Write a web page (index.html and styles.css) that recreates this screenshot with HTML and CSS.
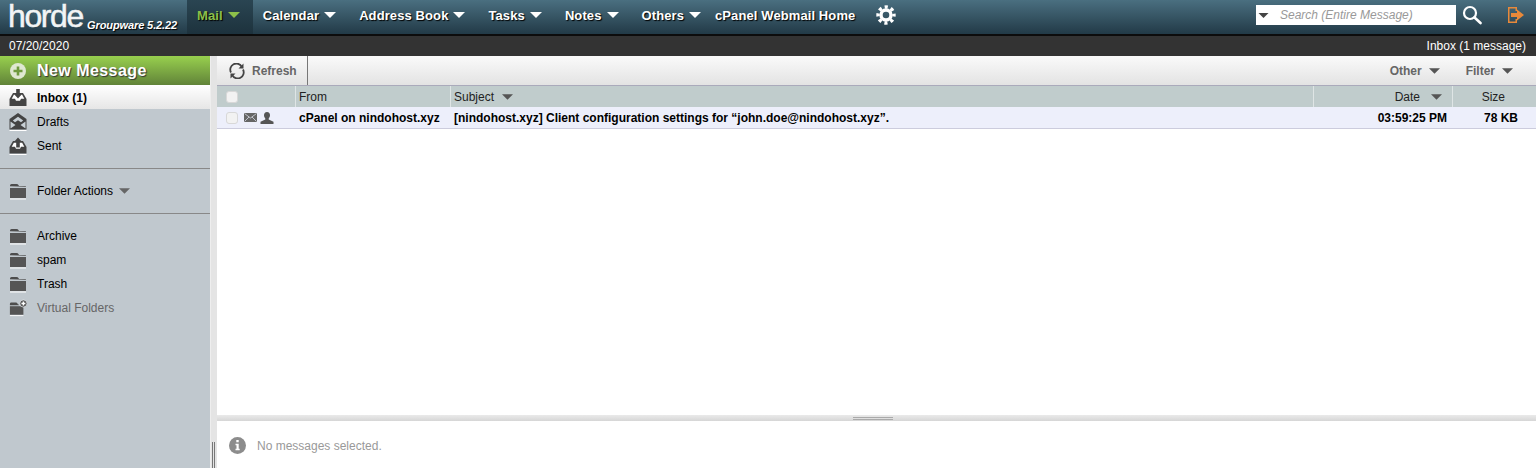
FILE: index.html
```html
<!DOCTYPE html>
<html lang="en">
<head>
<meta charset="utf-8">
<title>Horde Mail</title>
<link rel="stylesheet" href="styles.css">
</head>
<body>
<svg class="defs" width="0" height="0" aria-hidden="true">
  <defs>
    <symbol id="caret" viewBox="0 0 12 6"><path d="M0 0h12L6 6z"/></symbol>
    <symbol id="folder" viewBox="0 0 18 18"><path d="M1 4.200V3.500Q1 2 2.500 2h5Q9 2 9.600 3.200L10 4h6.500Q17 4 17 4.800z" fill="#4d4d4d"/><path d="M1 6h16v10H1z" fill="#555"/><path d="M1 16.500h16v1H1z" fill="#fff"/></symbol>
  </defs>
</svg>
<header class="topbar">
  <div class="logo"><span class="logo-word">horde</span><span class="logo-sub">Groupware 5.2.22</span></div>
  <nav class="nav">
    <a class="nav-item active">Mail<svg class="nav-caret"><use href="#caret"/></svg></a>
    <a class="nav-item">Calendar<svg class="nav-caret"><use href="#caret"/></svg></a>
    <a class="nav-item">Address Book<svg class="nav-caret"><use href="#caret"/></svg></a>
    <a class="nav-item">Tasks<svg class="nav-caret"><use href="#caret"/></svg></a>
    <a class="nav-item">Notes<svg class="nav-caret"><use href="#caret"/></svg></a>
    <a class="nav-item tight">Others<svg class="nav-caret"><use href="#caret"/></svg></a>
    <a class="nav-item plain">cPanel Webmail Home</a>
    <a class="nav-gear">
      <svg width="20" height="20" viewBox="0 0 20 20" fill="none" stroke="#fff"><circle cx="10" cy="10" r="5" stroke-width="3.400"/><circle cx="10" cy="10" r="8" stroke-width="3.400" stroke-dasharray="3.140 3.140" stroke-dashoffset="1.570"/></svg>
    </a>
  </nav>
  <div class="top-right">
    <div class="search">
      <svg class="search-caret"><use href="#caret"/></svg>
      <span class="search-text">Search (Entire Message)</span>
    </div>
    <svg class="search-icon" width="20" height="20" viewBox="0 0 20 20"><circle cx="8" cy="8" r="6" fill="none" stroke="#fff" stroke-width="2.200"/><path d="M12.500 12.500l6 5.500" stroke="#fff" stroke-width="2.600" stroke-linecap="round"/></svg>
    <svg class="logout-icon" width="18" height="18" viewBox="0 0 18 18"><path d="M1 1h9v4H8.500V2.500h-6v13h6V13H10v4H1z" fill="#e8893a"/><path d="M4 7h6V3.500L17 9l-7 5.500V11H4z" fill="#e8893a"/></svg>
  </div>
</header>
<div class="statusbar"><span>07/20/2020</span><span>Inbox (1 message)</span></div>
<main class="main">
  <aside class="sidebar">
    <a class="new-message">
      <svg width="16" height="16" viewBox="0 0 16 16"><circle cx="8" cy="8" r="8" fill="#dfe8d2"/><path d="M6.700 3.500h2.600v3.200h3.200v2.600H9.300v3.200H6.700V9.300H3.500V6.700h3.200z" fill="#6f9a3e"/></svg>
      <span>New Message</span>
    </a>
    <div class="side-row current">
      <svg class="mbox" viewBox="0 0 18 18"><path d="M4 4h10l3.500 6v7H.5v-7z" fill="#444"/><path d="M5 5.500L2.700 9.800H6l1 2h4l1-2h3.300L13 5.500z" fill="#fff"/><path d="M7.200 0h3.600v4.500h2.700L9 9.500l-4.500-5h2.700z" fill="#444"/></svg>
      <span>Inbox (1)</span>
    </div>
    <div class="side-row">
      <svg class="mbox" viewBox="0 0 18 18"><path d="M9 0l8.500 6v10.500H.5V6z" fill="#444"/><path d="M9 3.800L3.800 7.500 6 9.200 9 7.200l3 2 2.200-1.700z" fill="#c8d0d6"/><path d="M1.500 8.500L6.500 12 1.500 15.500zM16.500 8.500L11.500 12l5 3.500z" fill="#c8d0d6"/><path d="M.5 17h17v1H.5z" fill="#fff"/></svg>
      <span>Drafts</span>
    </div>
    <div class="side-row">
      <svg class="mbox" viewBox="0 0 18 18"><path d="M4 4h10l3.500 6v6.500H.5V10z" fill="#444"/><path d="M5 5.500L2.700 9.800H6l1 2h4l1-2h3.300L13 5.500z" fill="#fff"/><path d="M9 .5l4.500 5h-2.700v5H7.200v-5H4.500z" fill="#444"/><path d="M.5 17h17v1H.5z" fill="#fff"/></svg>
      <span>Sent</span>
    </div>
    <div class="side-group actions">
      <div class="side-row">
        <svg class="mbox"><use href="#folder"/></svg>
        <span>Folder Actions</span>
        <svg class="side-caret"><use href="#caret"/></svg>
      </div>
    </div>
    <div class="side-group folders">
      <div class="side-row"><svg class="mbox"><use href="#folder"/></svg><span>Archive</span></div>
      <div class="side-row"><svg class="mbox"><use href="#folder"/></svg><span>spam</span></div>
      <div class="side-row"><svg class="mbox"><use href="#folder"/></svg><span>Trash</span></div>
      <div class="side-row muted">
        <svg class="mbox" viewBox="0 0 20 20"><path d="M1 7V5.500Q1 4 2.500 4h5Q9 4 9.600 5.200L10 6h1v1z" fill="#4d4d4d"/><path d="M1 8h15v9.500H1z" fill="#555"/><path d="M1 18h15v1H1z" fill="#fff"/><circle cx="16" cy="5" r="4" fill="#555" stroke="#e4e8ea" stroke-width=".8"/><path d="M15.200 2.800h1.600v1.400h1.400v1.600h-1.400v1.400h-1.600V5.800h-1.400V4.200h1.400z" fill="#fff"/></svg>
        <span>Virtual Folders</span>
      </div>
    </div>
  </aside>
  <div class="splitter"><i class="grip"></i></div>
  <section class="content">
    <div class="toolbar">
      <a class="refresh">
        <svg width="16" height="16" viewBox="0 0 16 16" fill="none" stroke="#444" stroke-width="1.800"><path d="M2 9.500A6 6 0 0 1 12.800 3.800"/><path d="M14 6.500A6 6 0 0 1 3.200 12.200"/><path d="M14.500 .5v5h-5z" fill="#444" stroke="none"/><path d="M1.500 15.500v-5h5z" fill="#444" stroke="none"/></svg>
        <span>Refresh</span>
      </a>
      <div class="tool-right">
        <a class="tool-link">Other<svg class="tool-caret"><use href="#caret"/></svg></a>
        <a class="tool-link">Filter<svg class="tool-caret"><use href="#caret"/></svg></a>
      </div>
    </div>
    <div class="list-head">
      <div class="col-icons"><i class="check"></i></div>
      <div class="col-from sep">From</div>
      <div class="col-subject sep">Subject<svg class="head-caret"><use href="#caret"/></svg></div>
      <div class="col-date sep">Date<svg class="head-caret"><use href="#caret"/></svg></div>
      <div class="col-size sep">Size</div>
    </div>
    <div class="list-row">
      <div class="col-icons">
        <i class="check"></i>
        <svg class="env" width="13" height="9" viewBox="0 0 13 9"><path d="M0 0h13v9H0z" fill="#666"/><path d="M.5.500L6.500 5l6-4.500M.5 8.500L5 4M12.500 8.500L8 4" fill="none" stroke="#d8dbe6" stroke-width=".8"/></svg>
        <svg class="person" width="14" height="12" viewBox="0 0 14 12"><path d="M7 0c2 0 3 1.500 3 3.300 0 1.400-.6 2.400-1.300 3.200v1l4.800 2.300V12H.5V9.800L5.300 7.500v-1C4.600 5.700 4 4.700 4 3.300 4 1.500 5 0 7 0z" fill="#555"/></svg>
      </div>
      <div class="col-from">cPanel on nindohost.xyz</div>
      <div class="col-subject">[nindohost.xyz] Client configuration settings for “john.doe@nindohost.xyz”.</div>
      <div class="col-date">03:59:25 PM</div>
      <div class="col-size">78 KB</div>
    </div>
    <div class="list-empty"></div>
    <div class="preview-split"><i class="preview-grip"></i></div>
    <div class="preview">
      <svg width="17" height="17" viewBox="0 0 17 17"><circle cx="8.500" cy="8.500" r="8.500" fill="#8c8c8c"/><path d="M7.300 3h2.400v2.200H7.300zM6.500 6.800h3.200v5h1v1.500H6.500v-1.500h1v-3.500h-1z" fill="#fff"/></svg>
      <span>No messages selected.</span>
    </div>
  </section>
</main>
</body>
</html>
```
FILE: styles.css
```css
* { box-sizing: border-box; }
html, body { margin: 0; height: 468px; overflow: hidden; }
body {
  display: flex;
  flex-direction: column;
  font-family: "Liberation Sans", Arial, sans-serif;
  font-size: 12px;
  color: #000;
  background: #fff;
}
.defs { position: absolute; }
svg { display: block; flex: none; }

.topbar {
  height: 36px;
  display: flex;
  background: linear-gradient(#4a6f80, #223a47);
  border-bottom: 2px solid #0c0c0c;
  flex: none;
}
.logo { width: 187px; padding-left: 8px; display: flex; align-items: flex-start; color: #fff; }
.logo-word {
  font-size: 32px;
  line-height: 32px;
  letter-spacing: -1.400px;
  font-weight: 400;
  width: 79px;
  color: #f2f4f5;
  -webkit-text-stroke: .5px #f2f4f5;
}
.logo-sub {
  margin-top: 19px;
  font-size: 11px;
  line-height: 12px;
  font-weight: 700;
  font-style: italic;
  letter-spacing: -.1px;
  white-space: nowrap;
  text-shadow: 1px 1px 1px #000;
}
.nav { display: flex; flex: 1; }
.nav-item {
  display: flex;
  align-items: center;
  gap: 5px;
  padding: 0 13px 4px 10px;
  font-size: 13px;
  font-weight: 700;
  letter-spacing: .1px;
  color: #fff;
  white-space: nowrap;
  text-shadow: 1px 1px 1px #000;
}
.nav-item.tight { padding-right: 4px; }
.nav-item.plain { padding-right: 11px; }
.nav-item.active { color: #8cc04a; background: linear-gradient(#2a4552, #1d323d); padding-right: 13px; }
.nav-item.active .nav-caret { fill: #8cc04a; }
.nav-caret { width: 12px; height: 6px; fill: #fff; }
.nav-gear { display: flex; align-items: center; padding: 0 0 4px 10px; }
.top-right { display: flex; align-items: center; padding: 0 11px 4px 0; }
.search {
  width: 200px;
  height: 20px;
  background: #fff;
  display: flex;
  align-items: center;
  padding-left: 2px;
}
.search-caret { width: 11px; height: 5px; fill: #444; }
.search-text { margin-left: 11px; font-style: italic; color: #999; font-size: 12px; }
.search-icon { margin-left: 6px; }
.logout-icon { margin-left: 25px; }

.statusbar {
  height: 20px;
  flex: none;
  background: #333;
  color: #fff;
  display: flex;
  justify-content: space-between;
  align-items: center;
  padding: 0 10px 0 9px;
  font-size: 12px;
}

.main { flex: 1; display: flex; min-height: 0; }
.sidebar { width: 210px; background: #c0c8ce; flex: none; }
.new-message {
  height: 29px;
  display: flex;
  align-items: center;
  gap: 11px;
  padding-left: 10px;
  background: linear-gradient(#98d04e, #618339);
  color: #fff;
  font-size: 16px;
  font-weight: 700;
  letter-spacing: .45px;
  text-shadow: 1px 1px 1px #333;
}
.side-row {
  height: 24px;
  display: flex;
  align-items: center;
  padding: 1px 0 0 9px;
  white-space: nowrap;
}
.side-row.current { background: linear-gradient(#fff, #e6e6e6); font-weight: 700; }
.side-row.muted { color: #666; }
.mbox { width: 18px; height: 18px; margin-right: 10px; }
.side-caret { width: 11px; height: 6px; margin-left: 6px; fill: #666; }
.side-group { border-top: 1px solid #888; }
.actions { margin-top: 11px; padding: 9px 0 11px; }
.folders { padding-top: 9px; }

.splitter { width: 7px; flex: none; background: #e4e4e4; border-left: 1px solid #eee; display: flex; align-items: flex-end; padding-left: 1px; }
.grip { width: 3px; height: 26px; border-left: 1px solid #777; border-right: 1px solid #777; }

.content { flex: 1; min-width: 0; display: flex; flex-direction: column; }
.toolbar {
  height: 30px;
  flex: none;
  display: flex;
  justify-content: space-between;
  background: linear-gradient(#fafafa, #e3e3e3);
  border-bottom: 1px solid #aab;
  color: #666;
  font-weight: 700;
}
.refresh {
  display: flex;
  align-items: center;
  gap: 7px;
  padding-left: 12px;
  width: 91px;
  border-right: 1px solid #777;
}
.tool-right { display: flex; align-items: center; padding-right: 23px; gap: 26px; }
.tool-link { display: flex; align-items: center; gap: 7px; }
.tool-caret { width: 11px; height: 6px; fill: #555; }

.list-head, .list-row { display: flex; align-items: center; flex: none; }
.list-head { height: 21px; background: #c0cccc; color: #222; }
.list-row { height: 22px; background: #edeffb; border-bottom: 1px solid #ccd; font-weight: 700; }
.col-icons { width: 78px; display: flex; align-items: center; padding-left: 9px; flex: none; height: 100%; }
.col-from { width: 155px; padding-left: 4px; flex: none; white-space: nowrap; height: 100%; display: flex; align-items: center; }
.col-subject { flex: 1; padding-left: 4px; white-space: nowrap; height: 100%; display: flex; align-items: center; }
.col-date { width: 139px; flex: none; padding-right: 5px; display: flex; justify-content: flex-end; align-items: center; height: 100%; }
.col-size { width: 84px; flex: none; padding-right: 18px; text-align: right; display: flex; justify-content: flex-end; align-items: center; height: 100%; }
.list-head .sep { padding-top: 1px; }
.list-head .col-from, .list-head .col-subject { padding-left: 3px; }
.sep { border-left: 1px solid #dfe5e5; }
.head-caret { width: 11px; height: 6px; fill: #555; margin-left: 8px; }
.col-date .head-caret { margin-left: 11px; margin-right: 5px; }
.col-size.sep { padding-right: 31px; }
.check {
  display: block;
  width: 12px;
  height: 12px;
  background: #f2f2f2;
  border: 1px solid #d8d8d8;
  border-radius: 3px;
}
.env { margin-left: 6px; }
.person { margin-left: 3px; }

.list-empty { flex: 1; }
.preview-split {
  height: 6px;
  flex: none;
  background: linear-gradient(#eaeaea, #d6d6d6);
  display: flex;
  justify-content: center;
  align-items: center;
}
.preview-grip { width: 40px; height: 3px; border-top: 1px solid #aaa; border-bottom: 1px solid #aaa; margin-left: -7px; }
.preview {
  height: 47px;
  flex: none;
  display: flex;
  align-items: center;
  gap: 11px;
  padding: 2px 0 0 12px;
  color: #999;
}
```
